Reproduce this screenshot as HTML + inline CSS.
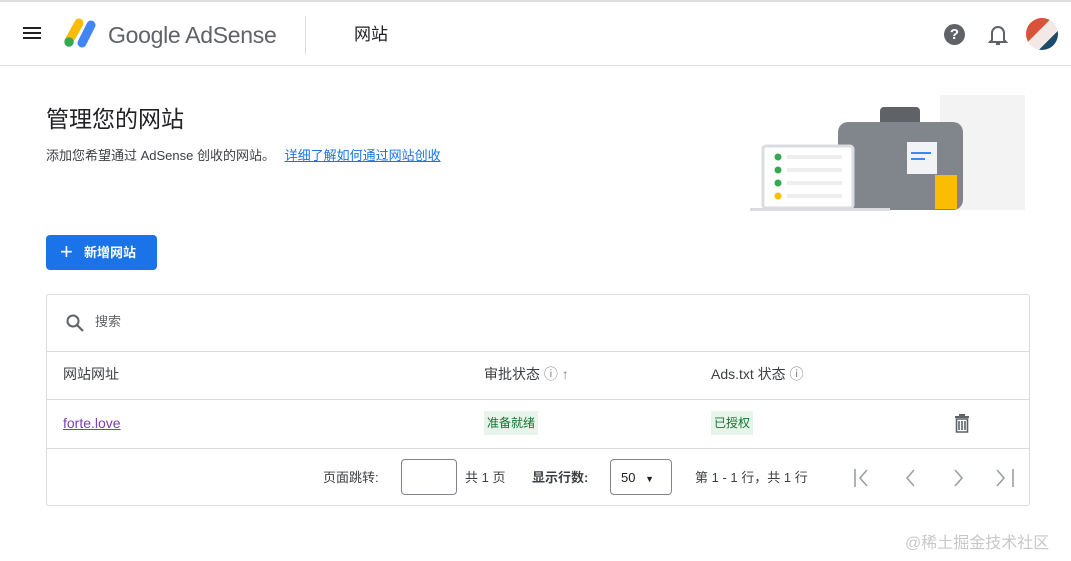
<!DOCTYPE html>
<html><head><meta charset="utf-8"><style>
*{box-sizing:border-box;margin:0;padding:0}
body{width:1071px;height:561px;background:#fff;font-family:"Liberation Sans","Noto Sans CJK SC",sans-serif;color:#202124;position:relative;overflow:hidden}
.top{position:absolute;left:0;top:0;width:1071px;height:66px;border-top:2px solid #e0e0e0;border-bottom:1px solid #dadce0}
.abs{position:absolute}
.th{font-size:14px;color:#3c4043;line-height:16px}
</style></head><body>
<div class="top">
 <div class="abs" style="left:23px;top:25px;width:18px;height:2px;background:#202124;box-shadow:0 5px 0 #202124,0 10px 0 #202124"></div>
 <svg class="abs" style="left:63px;top:15px" width="34" height="32" viewBox="0 0 34 32">
  <line x1="16" y1="6" x2="6" y2="24" stroke="#fbbc04" stroke-width="9" stroke-linecap="round"/>
  <line x1="28" y1="8" x2="19" y2="26" stroke="#4285f4" stroke-width="9" stroke-linecap="round"/>
  <circle cx="6" cy="25" r="4.7" fill="#34a853"/>
 </svg>
 <div class="abs" style="left:108px;top:19px;font-size:23px;line-height:28px;color:#5f6368;letter-spacing:-0.3px">Google AdSense</div>
 <div class="abs" style="left:305px;top:14px;width:1px;height:38px;background:#dadce0"></div>
 <div class="abs" style="left:354px;top:22px;font-size:17px;line-height:22px">网站</div>
 <div class="abs" style="left:944px;top:22px;width:21px;height:21px;border-radius:50%;background:#5f6368;color:#fff;font-weight:bold;font-size:15px;text-align:center;line-height:21px">?</div>
 <svg class="abs" style="left:988px;top:22px" width="20" height="22" viewBox="0 0 20 22"><path d="M4 16V9a6 6 0 0112 0v7l2 2H2z" fill="none" stroke="#5f6368" stroke-width="2"/><rect x="8" y="19" width="4" height="2" fill="#5f6368"/></svg>
 <div class="abs" style="left:1026px;top:16px;width:32px;height:32px;border-radius:50%;background:linear-gradient(135deg,#d9533b 0 40%,#f4e8e4 40% 70%,#1e4a6b 70%)"></div>
</div>
<div class="abs" style="left:46px;top:105px;font-size:23px;line-height:28px">管理您的网站</div>
<div class="abs" style="left:46px;top:148px;font-size:13px;line-height:16px;color:#3c4043">添加您希望通过 AdSense 创收的网站。 <span style="color:#1a73e8;text-decoration:underline;margin-left:6px">详细了解如何通过网站创收</span></div>
<svg class="abs" style="left:745px;top:90px" width="290" height="125" viewBox="0 0 290 125">
 <rect x="195" y="5" width="85" height="115" fill="#f3f3f3"/>
 <rect x="135" y="17" width="40" height="20" rx="4" fill="#5f6368"/>
 <rect x="93" y="32" width="125" height="88" rx="10" fill="#80868b"/>
 <rect x="162" y="52" width="30" height="32" fill="#f1f3f4"/>
 <rect x="166" y="62" width="20" height="2" fill="#4285f4"/><rect x="166" y="68" width="14" height="2" fill="#4285f4"/>
 <rect x="190" y="85" width="22" height="34" fill="#fbbc04"/>
 <rect x="18" y="56" width="90" height="62" rx="3" fill="#fff" stroke="#dadce0" stroke-width="3"/>
 <circle cx="33" cy="67" r="3.5" fill="#34a853"/><circle cx="33" cy="80" r="3.5" fill="#34a853"/><circle cx="33" cy="93" r="3.5" fill="#34a853"/><circle cx="33" cy="106" r="3.5" fill="#fbbc04"/>
 <rect x="42" y="65" width="55" height="4" fill="#eee"/><rect x="42" y="78" width="55" height="4" fill="#eee"/><rect x="42" y="91" width="55" height="4" fill="#eee"/><rect x="42" y="104" width="55" height="4" fill="#eee"/>
 <rect x="5" y="118" width="140" height="3" fill="#dadce0"/>
</svg>
<div class="abs" style="left:46px;top:235px;width:111px;height:35px;background:#1a73e8;border-radius:4px;color:#fff;font-size:13px;font-weight:bold;line-height:35px;padding-left:38px">新增网站</div>
<div class="abs" style="left:60px;top:243px;color:#fff;font-size:22px;line-height:18px">+</div>
<div class="abs" style="left:46px;top:294px;width:984px;height:212px;border:1px solid #dadce0;border-radius:3px">
 <svg class="abs" style="left:19px;top:19px" width="18" height="18" viewBox="0 0 18 18"><circle cx="7" cy="7" r="5.5" fill="none" stroke="#5f6368" stroke-width="2"/><line x1="11" y1="11" x2="17" y2="17" stroke="#5f6368" stroke-width="2.2"/></svg>
 <div class="abs" style="left:48px;top:19px;font-size:13px;line-height:16px;color:#5f6368">搜索</div>
 <div class="abs" style="left:0;top:56px;width:982px;height:1px;background:#dadce0"></div>
 <div class="abs th" style="left:16px;top:71px">网站网址</div>
 <div class="abs th" style="left:437px;top:71px">审批状态 <span style="color:#80868b">ⓘ ↑</span></div>
 <div class="abs th" style="left:664px;top:71px">Ads.txt 状态 <span style="color:#80868b">ⓘ</span></div>
 <div class="abs" style="left:0;top:104px;width:982px;height:1px;background:#dadce0"></div>
 <div class="abs" style="left:16px;top:120px;font-size:14px;line-height:16px;color:#7b3fb5;text-decoration:underline">forte.love</div>
 <div class="abs" style="left:437px;top:116px;background:#e6f4ea;color:#137333;font-size:12px;line-height:16px;padding:4px 3px">准备就绪</div>
 <div class="abs" style="left:664px;top:116px;background:#e6f4ea;color:#137333;font-size:12px;line-height:16px;padding:4px 3px">已授权</div>
 <svg class="abs" style="left:907px;top:119px" width="16" height="19" viewBox="0 0 16 19"><rect x="1" y="2" width="14" height="2" fill="#5f6368"/><rect x="5" y="0" width="6" height="2" fill="#5f6368"/><path d="M2.5 5h11v13h-11z M5 7v9 M8 7v9 M11 7v9" fill="none" stroke="#5f6368" stroke-width="1.6"/></svg>
 <div class="abs" style="left:0;top:153px;width:982px;height:1px;background:#dadce0"></div>
 <div class="abs th" style="left:276px;top:175px;font-size:13px">页面跳转:</div>
 <div class="abs" style="left:354px;top:164px;width:56px;height:36px;border:1px solid #80868b;border-radius:4px"></div>
 <div class="abs th" style="left:418px;top:175px;font-size:13px">共 1 页</div>
 <div class="abs" style="left:485px;top:175px;font-size:13px;line-height:16px;font-weight:bold;color:#3c4043">显示行数:</div>
 <div class="abs" style="left:563px;top:164px;width:62px;height:36px;border:1px solid #80868b;border-radius:4px;font-size:13px;line-height:16px;padding:10px 0 0 10px">50 <span style="font-size:9px;margin-left:6px">▼</span></div>
 <div class="abs th" style="left:648px;top:175px;font-size:13px">第 1 - 1 行，共 1 行</div>
 <svg class="abs" style="left:800px;top:170px" width="180" height="26" viewBox="0 0 180 26" fill="none" stroke="#9aa0a6" stroke-width="1.6">
  <path d="M8 4v18 M20 5l-7 8 7 8"/>
  <path d="M67 5l-7 8 7 8"/>
  <path d="M108 5l7 8-7 8"/>
  <path d="M150 5l7 8-7 8 M166 4v18"/>
 </svg>
</div>
<div class="abs" style="left:905px;top:533px;font-size:16px;line-height:22px;color:#c8c8c8">@稀土掘金技术社区</div>
</body></html>
